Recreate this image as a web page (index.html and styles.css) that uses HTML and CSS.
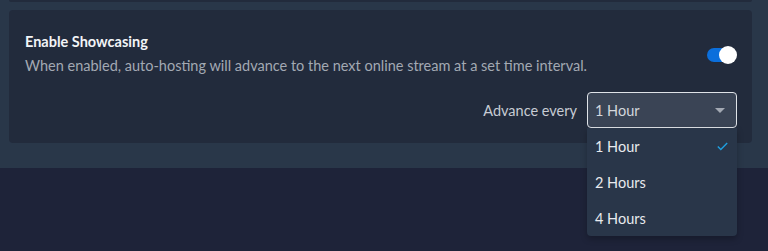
FILE: index.html
```html
<!DOCTYPE html>
<html>
<head>
<meta charset="utf-8">
<link rel="stylesheet" href="styles.css">
</head>
<body>
<div class="panel">
  <div class="card card-prev"></div>
  <div class="card">
    <div class="row">
      <div class="text">
        <div class="title">Enable Showcasing</div>
        <div class="desc">When enabled, auto-hosting will advance to the next online stream at a set time interval.</div>
      </div>
      <div class="toggle"><span class="track"></span><span class="knob"></span></div>
    </div>
    <div class="select-row">
      <span class="label">Advance every</span>
      <div class="select-wrap">
        <div class="select">
          <span>1 Hour</span>
          <svg class="arrow" width="10" height="5" viewBox="0 0 10 5"><polygon points="0,0 10,0 5,5" fill="#a3a9b3"/></svg>
        </div>
        <ul class="menu">
          <li class="item selected"><span>1 Hour</span>
            <svg class="check" width="11" height="9" viewBox="0 0 11 9"><polyline points="0.8,4.6 3.8,7.6 10.2,1" fill="none" stroke="#1f9fe0" stroke-width="1.4"/></svg>
          </li>
          <li class="item"><span>2 Hours</span></li>
          <li class="item"><span>4 Hours</span></li>
        </ul>
      </div>
    </div>
  </div>
</div>
</body>
</html>
```

FILE: styles.css
```css
html, body {
  margin: 0;
  padding: 0;
  background: #1e2339;
  font-family: Lato, "Noto Sans", sans-serif;
  font-size: 14.5px;
}

body {
  min-height: 251px;
}

.panel {
  background: #293749;
  padding: 0 16px 25px 9px;
  display: flex;
  flex-direction: column;
  gap: 8px;
}

.card {
  background: #222b3c;
  border-radius: 4px;
  padding: 22px 15px 15px 16px;
}

.card-prev {
  height: 2px;
  padding: 0;
  border-radius: 0 0 3px 3px;
}

.row {
  display: flex;
  align-items: center;
  justify-content: space-between;
}

.title {
  color: #f2f4f7;
  font-weight: 700;
  line-height: 20px;
  margin-bottom: 4px;
}

.desc {
  color: #a3a9b3;
  line-height: 20px;
}

.toggle {
  position: relative;
  width: 30px;
  height: 18px;
  margin-top: 2px;
}

.track {
  position: absolute;
  left: 0;
  top: 2px;
  width: 26px;
  height: 14px;
  border-radius: 7px;
  background: #0b6fdc;
}

.knob {
  position: absolute;
  right: 0;
  top: 0;
  width: 18px;
  height: 18px;
  border-radius: 50%;
  background: #ffffff;
}

.select-row {
  display: flex;
  justify-content: flex-end;
  align-items: center;
  margin-top: 16px;
}

.label {
  color: #c7ccd4;
  margin-right: 10px;
}

.select-wrap {
  position: relative;
  width: 150px;
}

.select {
  box-sizing: border-box;
  height: 36px;
  border: 1px solid #dfe3e8;
  border-radius: 4px;
  background: #3a4455;
  color: #d3d7dd;
  display: flex;
  align-items: center;
  justify-content: space-between;
  padding: 0 11px 0 7px;
}

.menu {
  position: absolute;
  top: 100%;
  left: 0;
  z-index: 10;
  width: 150px;
  margin: 0;
  padding: 0;
  list-style: none;
  background: #293649;
  border-radius: 0 0 4px 4px;
  box-shadow: 0 3px 6px rgba(0, 0, 0, 0.25);
}

.item {
  height: 36px;
  display: flex;
  align-items: center;
  justify-content: space-between;
  padding: 0 9px 0 8px;
  color: #e8eaee;
}
```
